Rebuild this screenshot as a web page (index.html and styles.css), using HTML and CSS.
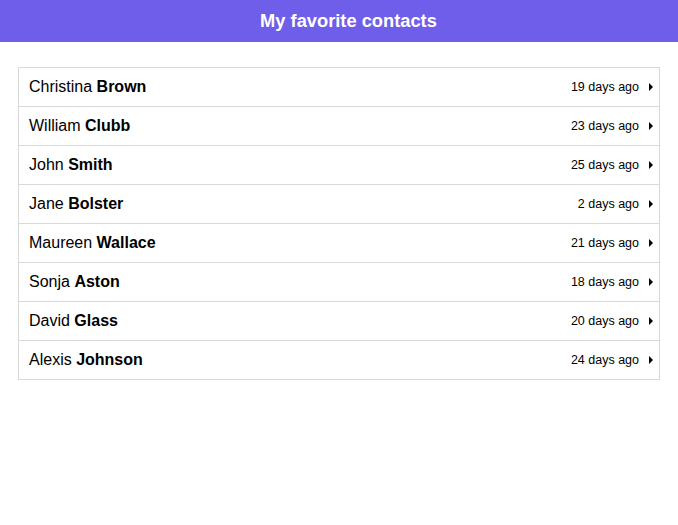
FILE: index.html
```html
<!DOCTYPE html>
<html>
<head>
<meta charset="utf-8">
<link rel="stylesheet" href="styles.css">
</head>
<body>
<header class="bar"><h1 class="title">My favorite contacts</h1></header>
<main class="content">
  <ul class="list">
    <li class="row"><span class="name">Christina <b>Brown</b></span><span class="meta"><span class="ago">19 days ago</span><i class="arrow"></i></span></li>
    <li class="row"><span class="name">William <b>Clubb</b></span><span class="meta"><span class="ago">23 days ago</span><i class="arrow"></i></span></li>
    <li class="row"><span class="name">John <b>Smith</b></span><span class="meta"><span class="ago">25 days ago</span><i class="arrow"></i></span></li>
    <li class="row"><span class="name">Jane <b>Bolster</b></span><span class="meta"><span class="ago">2 days ago</span><i class="arrow"></i></span></li>
    <li class="row"><span class="name">Maureen <b>Wallace</b></span><span class="meta"><span class="ago">21 days ago</span><i class="arrow"></i></span></li>
    <li class="row"><span class="name">Sonja <b>Aston</b></span><span class="meta"><span class="ago">18 days ago</span><i class="arrow"></i></span></li>
    <li class="row"><span class="name">David <b>Glass</b></span><span class="meta"><span class="ago">20 days ago</span><i class="arrow"></i></span></li>
    <li class="row"><span class="name">Alexis <b>Johnson</b></span><span class="meta"><span class="ago">24 days ago</span><i class="arrow"></i></span></li>
  </ul>
</main>
</body>
</html>
```
FILE: styles.css
```css
html, body {
  margin: 0;
  padding: 0;
  background: #fff;
  font-family: "Liberation Sans", Arial, sans-serif;
  color: #000;
}
.bar {
  height: 42px;
  background: #6f5eea;
  display: flex;
  align-items: center;
  justify-content: center;
  padding-left: 19px;
}
.title {
  margin: 0;
  font-size: 18.3px;
  font-weight: bold;
  color: #fff;
}
.content {
  padding: 25px 18px 0;
}
.list {
  list-style: none;
  margin: 0;
  padding: 0;
  border: 1px solid #d9d9d9;
}
.row {
  height: 38px;
  display: flex;
  align-items: center;
  justify-content: space-between;
  padding: 0 6px 0 10px;
  border-bottom: 1px solid #d9d9d9;
}
.row:last-child {
  border-bottom: none;
}
.name {
  font-size: 16px;
}
.name b {
  font-weight: bold;
}
.meta {
  display: flex;
  align-items: center;
}
.ago {
  font-size: 12.5px;
}
.arrow {
  display: block;
  width: 0;
  height: 0;
  margin-left: 10px;
  border-left: 4px solid #000;
  border-top: 4px solid transparent;
  border-bottom: 4px solid transparent;
}
```
